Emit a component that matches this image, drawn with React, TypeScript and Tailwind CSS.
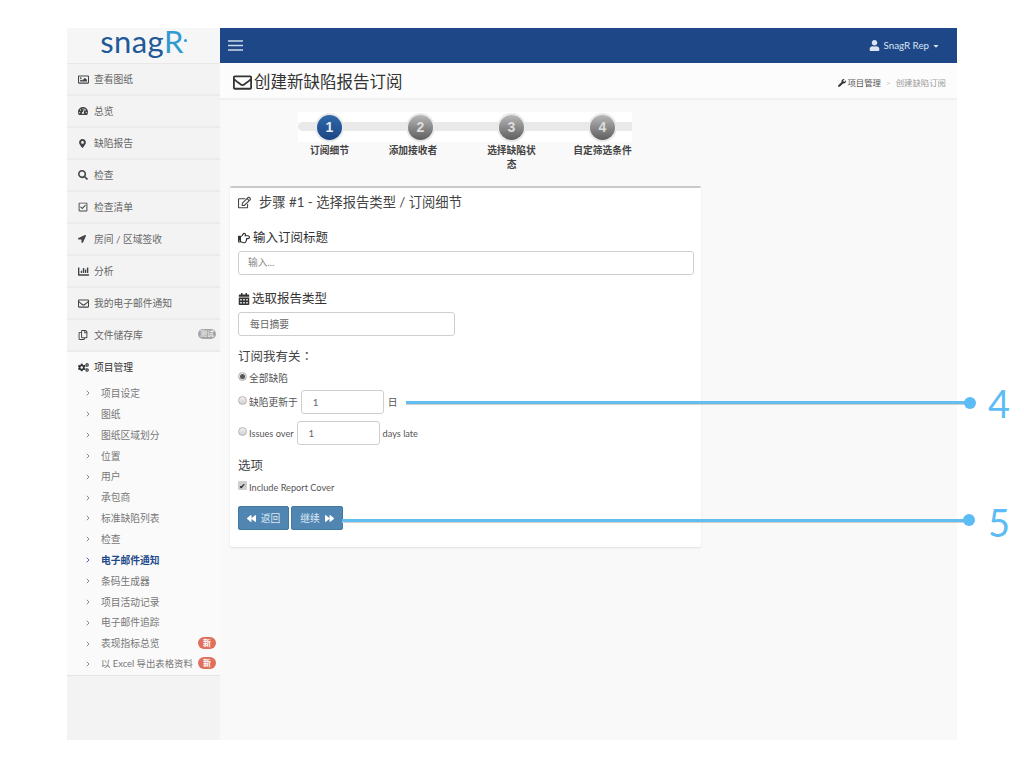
import React from "react";
import {
  FaRegImage, FaTachometerAlt, FaMapMarkerAlt, FaSearch, FaRegCheckSquare, FaLocationArrow,
  FaChartBar, FaRegEnvelope, FaRegCopy, FaCogs, FaRegEdit, FaRegHandPointRight,
  FaCalendarAlt, FaBackward, FaForward, FaWrench, FaUser, FaCaretDown,
} from "react-icons/fa";
import { ChevronRight } from "lucide-react";

const font = { fontFamily: '"Lato","Noto Sans CJK SC",sans-serif' };

const nav: [React.ComponentType<{ className?: string }>, string, string, string?][] = [
  [FaRegImage, "查看图纸", "text-[11px]"],
  [FaTachometerAlt, "总览", "text-[10px]"],
  [FaMapMarkerAlt, "缺陷报告", "text-[9px]"],
  [FaSearch, "检查", "text-[10px]"],
  [FaRegCheckSquare, "检查清单", "text-[10px]"],
  [FaLocationArrow, "房间 / 区域签收", "text-[8px]"],
  [FaChartBar, "分析", "text-[11px]"],
  [FaRegEnvelope, "我的电子邮件通知", "text-[11px]"],
  [FaRegCopy, "文件储存库", "text-[10px]", "测试"],
];

const sub: [string, boolean?, boolean?, string?][] = [
  ["项目设定"], ["图纸"], ["图纸区域划分"], ["位置"], ["用户"], ["承包商"], ["标准缺陷列表"], ["检查"],
  ["电子邮件通知", true], ["条码生成器"], ["项目活动记录"], ["电子邮件追踪"], ["表现指标总览", false, true], ["以 Excel 导出表格资料", false, true, "text-[9.4px]"],
];

function Step({ n, label, labelClass, active }: { n: number; label: string; labelClass: string; active?: boolean }) {
  return (
    <div className="flex w-[91px] flex-col items-center">
      <div className="flex h-[29px] w-[29px] items-center justify-center rounded-full bg-[#e9e9e9]">
        <div
          className={`flex h-[25px] w-[25px] items-center justify-center rounded-full text-[14px] font-bold ${
            active
              ? "bg-gradient-to-b from-[#2f69a8] to-[#1c4585] text-[#e8eef6]"
              : "bg-gradient-to-b from-[#b8b8b8] to-[#5f5f5f] text-[#dddddd]"
          }`}
          style={{ fontFamily: '"Liberation Sans",sans-serif' }}
        >
          {n}
        </div>
      </div>
      <div className={`mt-[1px] text-center text-[9.75px] font-bold leading-[14px] text-[#444] ${labelClass}`}>{label}</div>
    </div>
  );
}

function Radio({ on, up }: { on?: boolean; up?: boolean }) {
  return (
    <span className={`flex h-[9px] w-[9px] shrink-0 items-center justify-center rounded-full border border-[#b5b5b5] bg-gradient-to-b from-[#f2f2f2] to-[#cfcfcf] ${up ? "-mt-[3px]" : ""}`}>
      {on && <span className="h-[5px] w-[5px] rounded-full bg-[#555]" />}
    </span>
  );
}

function Field({ w, value }: { w: string; value: string }) {
  return (
    <div className={`flex h-[24px] items-center rounded-[3px] border border-[#cfcfcf] bg-white pl-[11px] text-[9.75px] text-[#666] ${w}`}>
      {value}
    </div>
  );
}

export default function App() {
  return (
    <div className="relative h-[768px] w-[1024px] overflow-hidden bg-white pt-[28px] pl-[67px]" style={font}>
      <div className="flex h-[712px] w-[890px]">
        <aside className="flex w-[153px] shrink-0 flex-col bg-[#f3f3f3]">
          <div className="flex h-[36px] shrink-0 items-center justify-center border-b border-[#e8e8e8] bg-[#f6f6f6] pb-[8px] text-[31px] leading-none tracking-[0.4px]">
            <span className="text-[#1f5a99]">snag</span>
            <span className="text-[#2f9bd0]">R</span>
            <span className="mb-[3px] h-[3px] w-[3px] rounded-full bg-[#2f9bd0]" />
          </div>
          {nav.map(([Icon, label, size, badge]) => (
            <div key={label} className="flex h-[32px] shrink-0 items-center border-b-2 border-[#ebebeb] pl-[11px] pr-[4px] text-[9.75px] text-[#666]">
              <span className="flex w-[16px] shrink-0 items-center text-[#444]"><Icon className={size} /></span>
              <span className="flex-1">{label}</span>
              {badge && (
                <span className="-mt-[3px] flex h-[10px] w-[18px] items-center justify-center rounded-full bg-[#a5a5a5] text-[7px] text-white">{badge}</span>
              )}
            </div>
          ))}
          <div className="shrink-0 bg-[#fafafa]">
            <div className="flex h-[31px] items-center pl-[11px] text-[9.75px] text-[#333]">
              <span className="flex w-[16px] shrink-0 items-center text-[#333]"><FaCogs className="text-[11px]" /></span>
              项目管理
            </div>
            <div className="flex flex-col">
              {sub.map(([label, active, isNew, size]) => (
                <div key={label} className={`flex h-[20.85px] items-center pl-[17px] pr-[4px] ${size ?? "text-[9.75px]"} ${active ? "font-bold text-[#1f4a8a]" : "text-[#777]"}`}>
                  <ChevronRight size={8} strokeWidth={2.5} className={`mr-[9px] shrink-0 ${active ? "text-[#1f4a8a]" : "text-[#777]"}`} />
                  <span className="flex-1 whitespace-nowrap">{label}</span>
                  {isNew && (
                    <span className="-mt-[2px] flex h-[12px] w-[18px] shrink-0 items-center justify-center rounded-full bg-[#e0705c] text-[8px] font-bold text-white">新</span>
                  )}
                </div>
              ))}
            </div>
          </div>
          <div className="flex-1 border-t border-[#e4e4e4] bg-[#f3f3f3]" />
        </aside>
        <main className="flex min-w-0 flex-1 flex-col bg-[#f9f9f9]">
          <header className="flex h-[35px] shrink-0 items-center justify-between bg-[#1e4788] pl-[8px] pr-[17px] text-white">
            <svg width="15" height="11" viewBox="0 0 15 11" className="text-[#cdd9e8]">
              <path d="M0 1h15M0 5.5h15M0 10h15" stroke="currentColor" strokeWidth="1.5" fill="none" />
            </svg>
            <div className="flex items-center text-[9.75px] text-[#dbe4f0]">
              <FaUser className="mr-[4px] text-[11px]" />
              SnagR Rep
              <FaCaretDown className="ml-[3px] text-[8px]" />
            </div>
          </header>
          <div className="flex h-[37px] shrink-0 items-center justify-between border-b-2 border-[#efefef] bg-[#fcfcfc] pl-[13px] pr-[11px] pt-[3px]">
            <div className="flex items-center text-[16.5px] text-[#333]">
              <FaRegEnvelope className="mr-[2px] text-[19px]" />
              创建新缺陷报告订阅
            </div>
            <div className="mt-[3px] flex items-center text-[8.4px] text-[#555]">
              <FaWrench className="mr-[1px] text-[8px] text-[#333]" />
              项目管理
              <span className="mx-[5px] text-[#ccc]">&gt;</span>
              <span className="text-[#999]">创建缺陷订阅</span>
            </div>
          </div>
          <div className="relative ml-[64px] mt-[13px] flex h-[73px] shrink-0">
            <div className="absolute left-[14px] -top-[1px] h-[30px] w-[334px] bg-white" />
            <div className="absolute left-[14px] top-[9px] h-[9px] w-[334px] rounded-l-full bg-[#e9e9e9]" />
            <div className="relative flex">
              <Step n={1} label="订阅细节" labelClass="w-[60px]" active />
              <Step n={2} label="添加接收者" labelClass="w-[60px] mr-[15px]" />
              <Step n={3} label="选择缺陷状态" labelClass="w-[52px]" />
              <Step n={4} label="自定筛选条件" labelClass="w-[62px]" />
            </div>
          </div>
          <section className="ml-[10px] flex h-[361px] w-[471px] flex-col rounded-[2px] border-t-2 border-[#c9c9c9] bg-white px-[8px] shadow-[0_1px_2px_rgba(0,0,0,0.1)]">
            <div className="mt-[5px] flex items-center text-[13.3px] text-[#444]">
              <FaRegEdit className="mr-[8px] text-[13px] text-[#444]" />
              步骤 #1 - 选择报告类型 / 订阅细节
            </div>
            <div className="mt-[16px] flex items-center text-[12.5px] text-[#333]">
              <FaRegHandPointRight className="mr-[3px] text-[12px]" />
              输入订阅标题
            </div>
            <div className="mt-[3px] flex h-[24px] w-[456px] items-center rounded-[3px] border border-[#cfcfcf] pl-[9px] text-[9.75px] text-[#888]">输入...</div>
            <div className="mt-[15px] flex items-center text-[12.5px] text-[#333]">
              <FaCalendarAlt className="mr-[2px] text-[12px]" />
              选取报告类型
            </div>
            <div className="mt-[4px]"><Field w="w-[217px]" value="每日摘要" /></div>
            <div className="mt-[12px] text-[12.5px] leading-[18px] text-[#444]" style={{ fontFamily: '"Lato","Noto Sans CJK TC",sans-serif' }}>订阅我有关：</div>
            <div className="mt-[5px] flex h-[14px] items-center gap-[2px] text-[9.75px] text-[#555]"><Radio on up />全部缺陷</div>
            <div className="mt-[5px] flex h-[24px] items-center text-[9.75px] text-[#555]">
              <Radio up /><span className="ml-[2px]">缺陷更新于</span>
              <div className="ml-[3px]"><Field w="w-[83px]" value="1" /></div>
              <span className="ml-[4px]">日</span>
            </div>
            <div className="mt-[7px] flex h-[24px] items-center text-[9.2px] text-[#555]">
              <Radio up /><span className="ml-[2px]">Issues over</span>
              <div className="ml-[3px]"><Field w="w-[83px]" value="1" /></div>
              <span className="ml-[3px]">days late</span>
            </div>
            <div className="mt-[12px] text-[12.5px] leading-[18px] text-[#444]">选项</div>
            <div className="mt-[5px] flex h-[14px] items-center gap-[2px] text-[9.2px] text-[#555]">
              <span className="-mt-[3px] flex h-[9px] w-[9px] items-center justify-center rounded-[1px] bg-[#cfcfcf] text-[8px] leading-none text-[#222]">✔</span>
              Include Report Cover
            </div>
            <div className="mt-[12px] flex gap-[2px]">
              <button className="flex h-[24px] w-[51px] items-center justify-center gap-[5px] rounded-[2px] border border-[#43799f] bg-[#5186b3] text-[9.75px] text-[#dce8f2]"><FaBackward className="text-[9px] text-white" />返回</button>
              <button className="flex h-[24px] w-[52px] items-center justify-center gap-[5px] rounded-[2px] border border-[#43799f] bg-[#5186b3] text-[9.75px] text-[#dce8f2]">继续<FaForward className="text-[9px] text-white" /></button>
            </div>
          </section>
        </main>
      </div>

      <div className="absolute left-[406px] top-[401px] h-[3px] w-[564px] bg-[#62bdf0] shadow-[0_1px_0_#cfcfcf]" />
      <div className="absolute left-[964px] top-[397px] h-[12px] w-[12px] rounded-full bg-[#5cbcf5]" />
      <div className="absolute left-[988px] top-[384px] text-[38px] leading-[38px] text-[#5cbcf5]">4</div>
      <div className="absolute left-[342px] top-[519px] h-[3px] w-[626px] bg-[#62bdf0] shadow-[0_1px_0_#cfcfcf]" />
      <div className="absolute left-[963px] top-[514px] h-[12px] w-[12px] rounded-full bg-[#5cbcf5]" />
      <div className="absolute left-[988px] top-[503px] text-[38px] leading-[38px] text-[#5cbcf5]">5</div>
    </div>
  );
}
